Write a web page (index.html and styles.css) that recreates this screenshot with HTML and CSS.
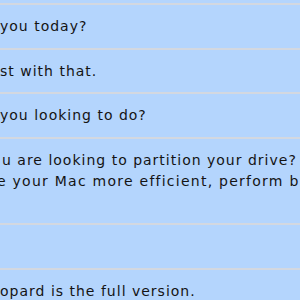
FILE: index.html
```html
<!DOCTYPE html>
<html><head>
    <title>Chat</title>
    <meta charset="UTF-8">
    <meta name="viewport" content="width=device-width, initial-scale=1">
    <link rel="stylesheet" href="styles.css">
    </head>

    <body>
        <div class="chat-list">
            <div class="row">you today?</div>
            <div class="row">st with that.</div>
            <div class="row">you looking to do?</div>
            <div class="row">
                <div class="line line-first">u are looking to partition your drive?</div>
                <div class="line line-cut">e your Mac more efficient, perform b</div>
                <div class="line"></div>
            </div>
            <div class="row"><div class="line"></div></div>
            <div class="row">opard is the full version.</div>
        </div>
    </body>
</html>
```

FILE: styles.css
```css
html, body {
    margin: 0;
    padding: 0;
    height: 100%;
    background: #b4d5fd;
    overflow: hidden;
}

.chat-list {
    font-family: "DejaVu Sans", Verdana, sans-serif;
    font-size: 14px;
    letter-spacing: 1px;
    color: #141414;
    white-space: nowrap;
    overflow: hidden;
    padding-top: 3px;
}

.row {
    border-top: 2px solid #d3d8e0;
    line-height: 21px;
    padding: 11px 0 10.5px 0;
}

.line {
    height: 21px;
}

.line-first {
    padding-left: 2px;
}

.line-cut {
    margin-left: -3px;
    letter-spacing: 1.25px;
}
```
